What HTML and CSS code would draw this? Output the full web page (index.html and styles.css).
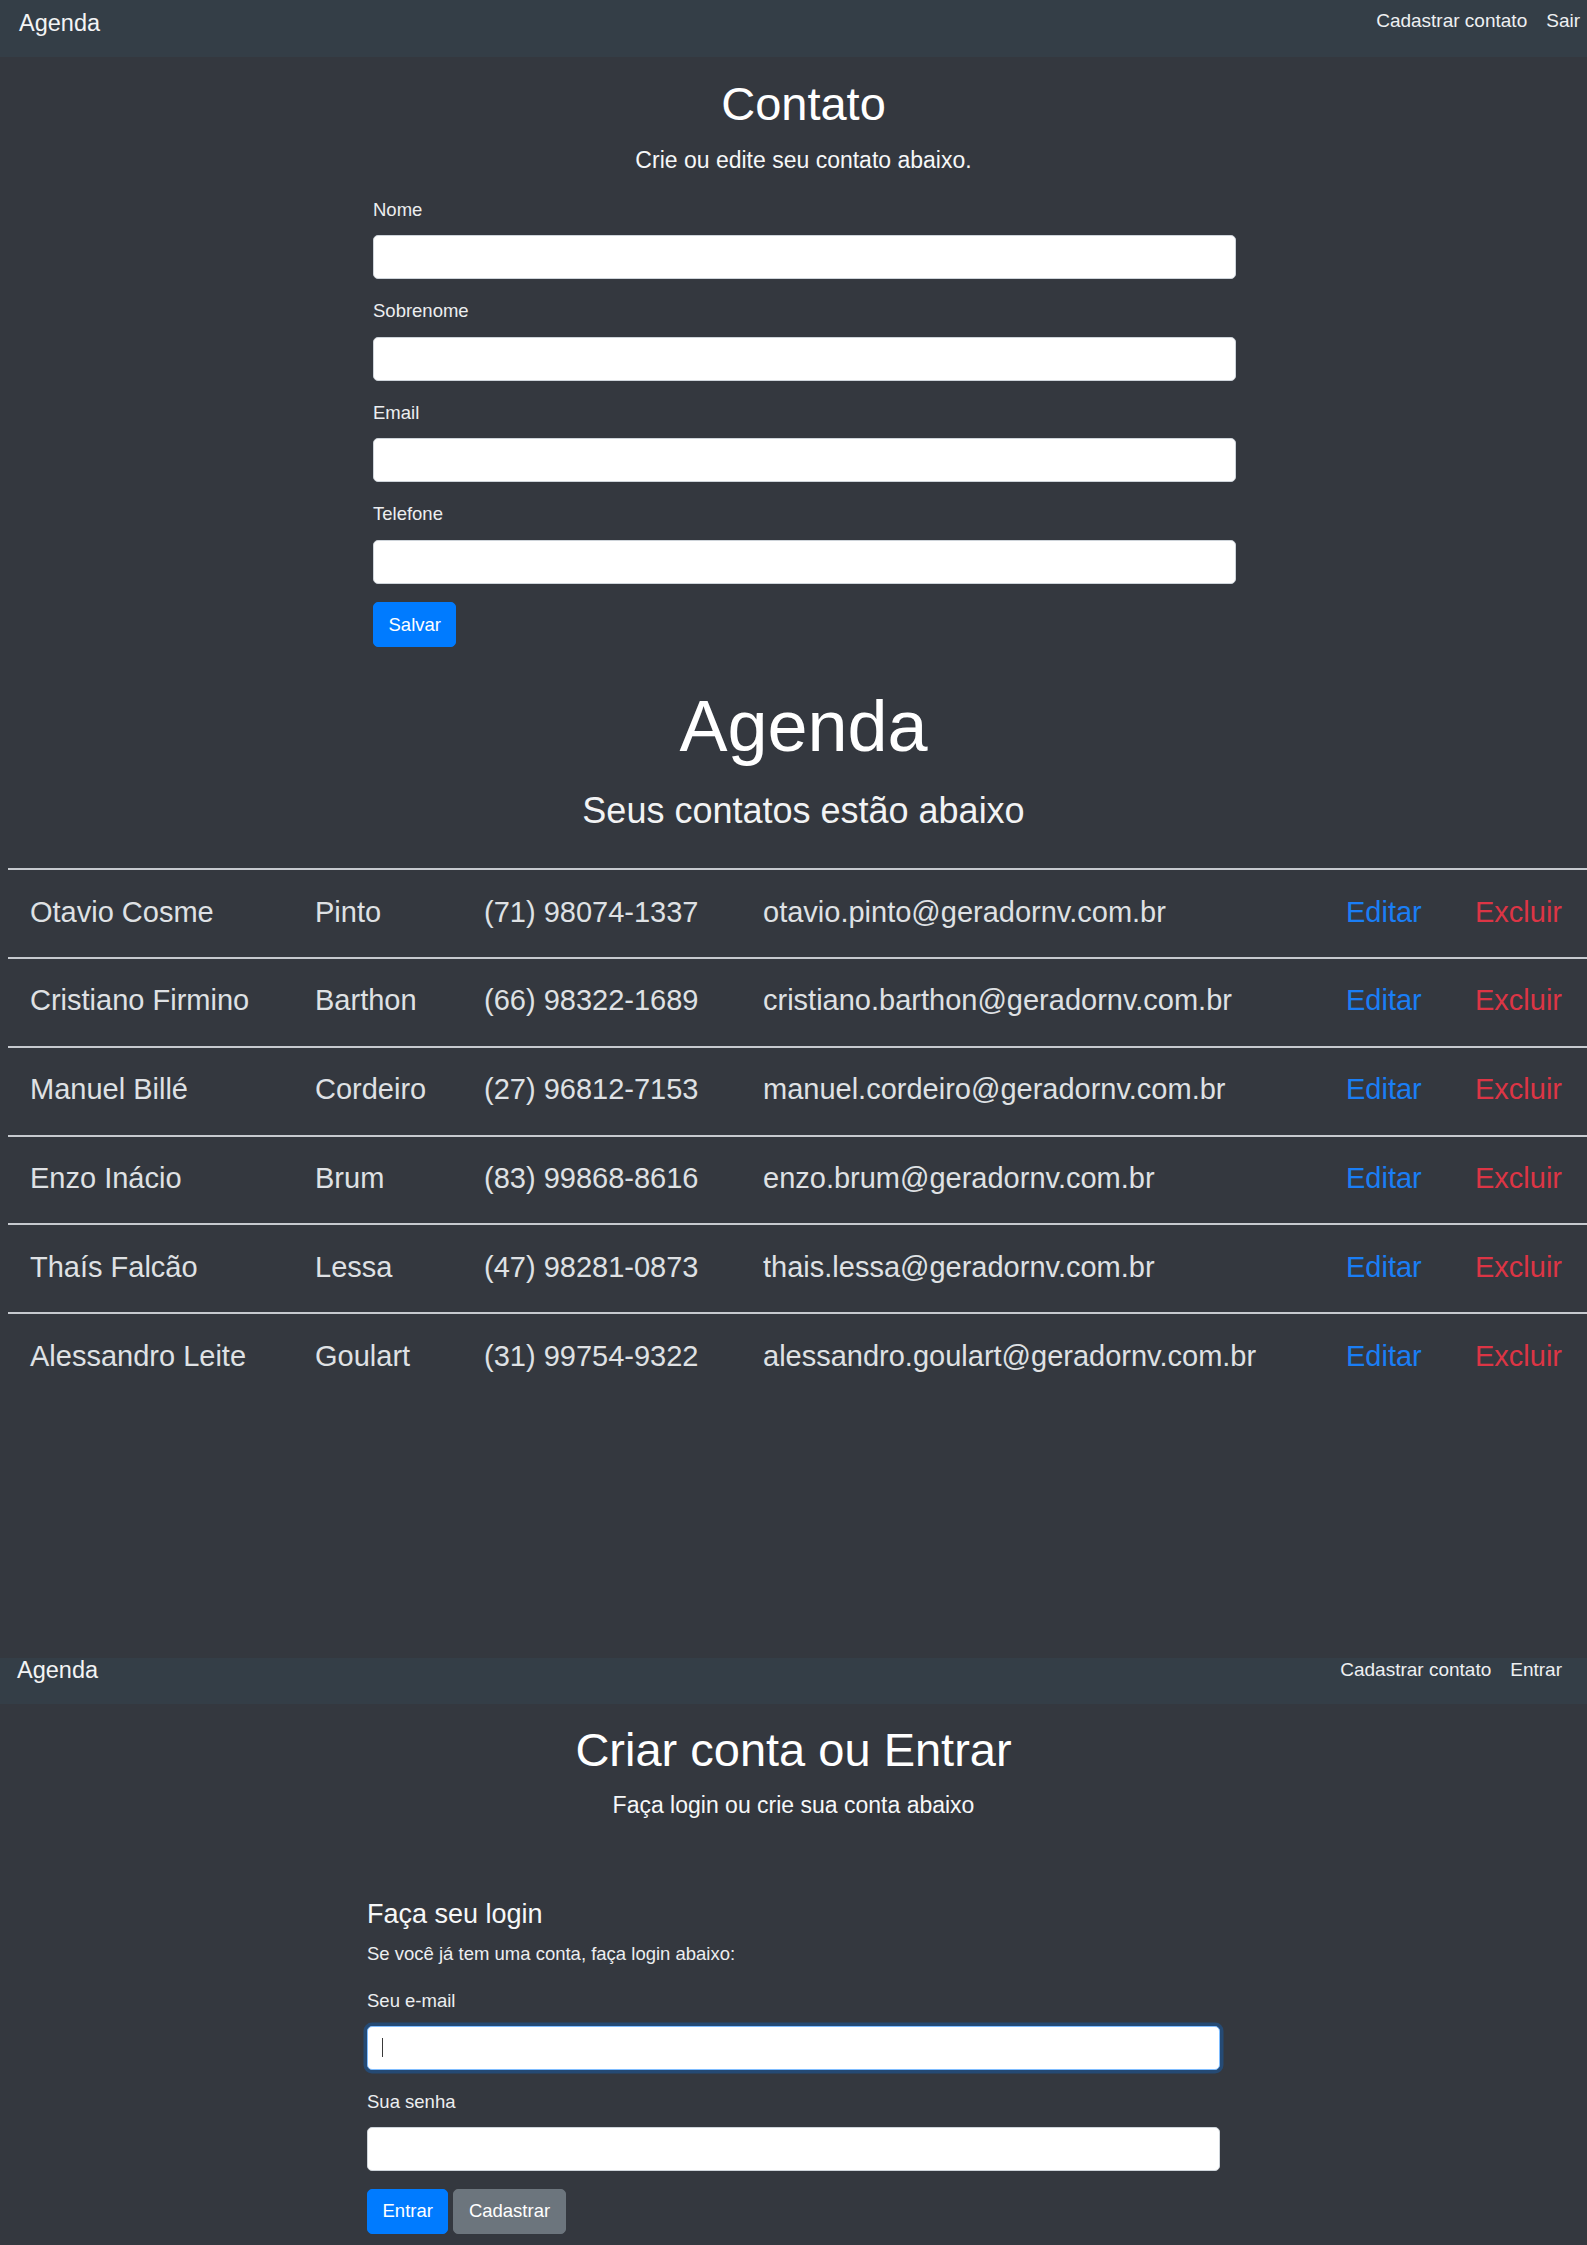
FILE: index.html
```html
<!DOCTYPE html>
<html lang="pt-BR">
<head>
<meta charset="utf-8">
<title>Agenda</title>
<link rel="stylesheet" href="styles.css">
</head>
<body>
<div class="page page-main">
  <nav class="navbar navbar-main">
    <a class="brand" href="#">Agenda</a>
    <ul class="nav-links">
      <li><a href="#">Cadastrar contato</a></li>
      <li><a href="#">Sair</a></li>
    </ul>
  </nav>

  <section class="hero hero-contato">
    <h1 class="title">Contato</h1>
    <p class="lead">Crie ou edite seu contato abaixo.</p>
  </section>

  <form class="form form-contato">
    <div class="form-group">
      <label class="label">Nome</label>
      <input class="form-control" type="text">
    </div>
    <div class="form-group">
      <label class="label">Sobrenome</label>
      <input class="form-control" type="text">
    </div>
    <div class="form-group">
      <label class="label">Email</label>
      <input class="form-control" type="text">
    </div>
    <div class="form-group">
      <label class="label">Telefone</label>
      <input class="form-control" type="text">
    </div>
    <div class="actions actions-contato">
      <button class="btn btn-primary" type="button">Salvar</button>
    </div>
  </form>

  <section class="agenda-head">
    <h1 class="display">Agenda</h1>
    <p class="display-sub">Seus contatos estão abaixo</p>
  </section>

  <div class="contacts">
    <div class="row"><span>Otavio Cosme</span><span>Pinto</span><span>(71) 98074-1337</span><span>otavio.pinto@geradornv.com.br</span><a class="edit" href="#">Editar</a><a class="del" href="#">Excluir</a></div>
    <div class="row"><span>Cristiano Firmino</span><span>Barthon</span><span>(66) 98322-1689</span><span>cristiano.barthon@geradornv.com.br</span><a class="edit" href="#">Editar</a><a class="del" href="#">Excluir</a></div>
    <div class="row"><span>Manuel Billé</span><span>Cordeiro</span><span>(27) 96812-7153</span><span>manuel.cordeiro@geradornv.com.br</span><a class="edit" href="#">Editar</a><a class="del" href="#">Excluir</a></div>
    <div class="row"><span>Enzo Inácio</span><span>Brum</span><span>(83) 99868-8616</span><span>enzo.brum@geradornv.com.br</span><a class="edit" href="#">Editar</a><a class="del" href="#">Excluir</a></div>
    <div class="row"><span>Thaís Falcão</span><span>Lessa</span><span>(47) 98281-0873</span><span>thais.lessa@geradornv.com.br</span><a class="edit" href="#">Editar</a><a class="del" href="#">Excluir</a></div>
    <div class="row"><span>Alessandro Leite</span><span>Goulart</span><span>(31) 99754-9322</span><span>alessandro.goulart@geradornv.com.br</span><a class="edit" href="#">Editar</a><a class="del" href="#">Excluir</a></div>
  </div>
</div>

<div class="page page-login">
  <nav class="navbar navbar-login">
    <a class="brand" href="#">Agenda</a>
    <ul class="nav-links">
      <li><a href="#">Cadastrar contato</a></li>
      <li><a href="#">Entrar</a></li>
    </ul>
  </nav>

  <section class="hero hero-login">
    <h1 class="title">Criar conta ou Entrar</h1>
    <p class="lead">Faça login ou crie sua conta abaixo</p>
  </section>

  <form class="form form-login">
    <h2 class="form-title">Faça seu login</h2>
    <p class="form-text">Se você já tem uma conta, faça login abaixo:</p>
    <div class="form-group">
      <label class="label">Seu e-mail</label>
      <div class="input-wrap">
        <input class="form-control is-focused" type="email">
        <span class="caret"></span>
      </div>
    </div>
    <div class="form-group">
      <label class="label">Sua senha</label>
      <input class="form-control" type="password">
    </div>
    <div class="actions actions-login">
      <button class="btn btn-primary" type="button">Entrar</button>
      <button class="btn btn-secondary" type="button">Cadastrar</button>
    </div>
  </form>
</div>
</body>
</html>
```

FILE: styles.css
```css
* { box-sizing: border-box; }

html {
  background: #34383f;
}

body {
  margin: 0;
  min-height: 2245px;
  background: #34383f;
  color: #f4f5f6;
  font-family: "Liberation Sans", Arial, sans-serif;
}

a { text-decoration: none; }

/* ---------- pages ---------- */
.page-main {
  min-height: 1658px;
  display: flex;
  flex-direction: column;
}

/* ---------- navbar ---------- */
.navbar {
  display: flex;
  justify-content: space-between;
  align-items: flex-start;
  background: #343e47;
}

.navbar-main {
  height: 57px;
  padding: 0 7px 0 19px;
}

.navbar-login {
  height: 46px;
  padding: 0 25px 0 17px;
}

.brand {
  color: #f3f4f5;
  font-size: 23.5px;
  line-height: 30px;
}

.navbar-main .brand { margin-top: 7.5px; }
.navbar-login .brand { line-height: 23.5px; margin-top: 0.5px; }

.nav-links {
  list-style: none;
  margin: 0;
  padding: 0;
  display: flex;
  gap: 19px;
}

.nav-links a {
  color: #eef0f2;
  font-size: 19px;
  line-height: 30px;
}

.navbar-main .nav-links { margin-top: 6.3px; }
.navbar-login .nav-links a { line-height: 23px; }
.navbar-login .nav-links { margin-top: 0; }

/* ---------- hero ---------- */
.hero {
  text-align: center;
}

.page-main .hero,
.agenda-head {
  padding-left: 20px;
}

.title {
  margin: 0;
  font-size: 47px;
  font-weight: 400;
  line-height: 1.2;
  color: #ffffff;
}

.lead {
  margin: 11.2px 0 0;
  font-size: 23px;
  line-height: 1.5;
  color: #f6f7f8;
}

.hero-contato { margin-top: 18.8px; }
.hero-login { margin-top: 17.8px; }
.hero-login .lead { margin-top: 9.7px; }

/* ---------- forms ---------- */
.form-contato {
  margin: 17.7px 0 0 373px;
  width: 863px;
}

.form-login {
  margin: 75.9px 0 0 367px;
  width: 853px;
}

.form-group {
  display: flex;
  flex-direction: column;
  margin-bottom: 18.3px;
}

.form-login .form-group { margin-bottom: 17.5px; }

.label {
  font-size: 18.5px;
  line-height: 27.75px;
  margin-bottom: 11.6px;
  color: #eceef0;
}

.form-control {
  display: block;
  width: 100%;
  height: 44px;
  margin: 0;
  padding: 6px 14px;
  font-family: "Liberation Sans", Arial, sans-serif;
  font-size: 18.5px;
  background: #ffffff;
  border: 1px solid #ced4da;
  border-radius: 5px;
  outline: none;
}

.form-control.is-focused {
  border-color: #80bdff;
  box-shadow: 0 0 0 3.5px rgba(0, 123, 255, 0.28);
}

.input-wrap {
  position: relative;
}

.caret {
  position: absolute;
  left: 15px;
  top: 12px;
  width: 1px;
  height: 19px;
  background: #3a3a3a;
}

.form-title {
  margin: 0;
  font-size: 27px;
  font-weight: 400;
  line-height: 1.2;
  color: #f6f7f8;
}

.form-text {
  margin: 9.4px 0 19.2px;
  font-size: 18.5px;
  line-height: 27.75px;
  color: #eceef0;
}

.actions {
  display: flex;
  gap: 5px;
}

.actions-contato { margin-top: 1.7px; }
.actions-login { margin-top: 1px; }

.btn {
  font-family: "Liberation Sans", Arial, sans-serif;
  font-size: 18.5px;
  line-height: 27.75px;
  padding: 7.6px 14.5px;
  border: 1px solid transparent;
  border-radius: 5px;
  color: #ffffff;
  cursor: pointer;
}

.btn-primary {
  background: #007bff;
  border-color: #007bff;
}

.btn-secondary {
  background: #6c757d;
  border-color: #6c757d;
}

/* ---------- agenda list ---------- */
.agenda-head {
  text-align: center;
  margin-top: 35.6px;
}

.display {
  margin: 0;
  font-size: 72px;
  font-weight: 400;
  line-height: 1.2;
  color: #ffffff;
}

.display-sub {
  margin: 19.8px 0 0;
  font-size: 36px;
  line-height: 1.2;
  color: #f2f3f4;
}

.contacts {
  margin: 35.8px 0 0 8px;
  width: 1579px;
}

.row {
  display: grid;
  grid-template-columns: 285px 169px 279px 583px 129px 134px;
  align-items: start;
  height: 88.9px;
  padding-top: 24.7px;
  border-top: 2px solid #c6cacf;
  font-size: 29px;
  line-height: 1.2;
  color: #dfe1e4;
}

.row > * {
  padding-left: 22px;
  white-space: nowrap;
}

.edit { color: #1a7ef5; }
.del { color: #dc3545; }
```
